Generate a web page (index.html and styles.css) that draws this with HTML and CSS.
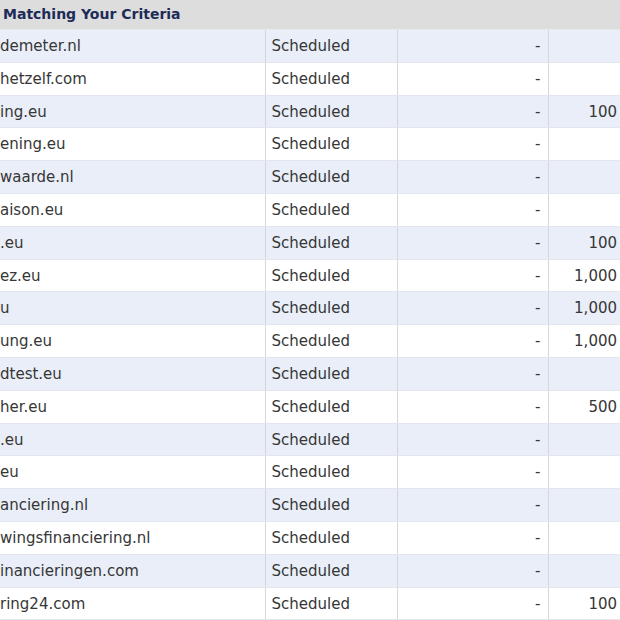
FILE: index.html
```html
<!DOCTYPE html>
<html lang="en">
<head>
    <meta charset="UTF-8">
    <title>Domains Matching Your Criteria</title>
    <link rel="stylesheet" href="styles.css">
</head>
<body>
    <div class="results">
        <table class="domains">
            <colgroup>
                <col class="col-name">
                <col class="col-status">
                <col class="col-bid">
                <col class="col-price">
            </colgroup>
            <thead>
                <tr>
                    <th colspan="4">Matching Your Criteria</th>
                </tr>
            </thead>
            <tbody>
                <tr><td>demeter.nl</td><td>Scheduled</td><td class="num">-</td><td class="num"></td></tr>
                <tr><td>hetzelf.com</td><td>Scheduled</td><td class="num">-</td><td class="num"></td></tr>
                <tr><td>ing.eu</td><td>Scheduled</td><td class="num">-</td><td class="num">100</td></tr>
                <tr><td>ening.eu</td><td>Scheduled</td><td class="num">-</td><td class="num"></td></tr>
                <tr><td>waarde.nl</td><td>Scheduled</td><td class="num">-</td><td class="num"></td></tr>
                <tr><td>aison.eu</td><td>Scheduled</td><td class="num">-</td><td class="num"></td></tr>
                <tr><td>.eu</td><td>Scheduled</td><td class="num">-</td><td class="num">100</td></tr>
                <tr><td>ez.eu</td><td>Scheduled</td><td class="num">-</td><td class="num">1,000</td></tr>
                <tr><td>u</td><td>Scheduled</td><td class="num">-</td><td class="num">1,000</td></tr>
                <tr><td>ung.eu</td><td>Scheduled</td><td class="num">-</td><td class="num">1,000</td></tr>
                <tr><td>dtest.eu</td><td>Scheduled</td><td class="num">-</td><td class="num"></td></tr>
                <tr><td>her.eu</td><td>Scheduled</td><td class="num">-</td><td class="num">500</td></tr>
                <tr><td>.eu</td><td>Scheduled</td><td class="num">-</td><td class="num"></td></tr>
                <tr><td>eu</td><td>Scheduled</td><td class="num">-</td><td class="num"></td></tr>
                <tr><td>anciering.nl</td><td>Scheduled</td><td class="num">-</td><td class="num"></td></tr>
                <tr><td>wingsfinanciering.nl</td><td>Scheduled</td><td class="num">-</td><td class="num"></td></tr>
                <tr><td>inancieringen.com</td><td>Scheduled</td><td class="num">-</td><td class="num"></td></tr>
                <tr><td>ring24.com</td><td>Scheduled</td><td class="num">-</td><td class="num">100</td></tr>
            </tbody>
        </table>
    </div>
</body>
</html>
```

FILE: styles.css
```css
* {
    margin: 0;
    padding: 0;
    box-sizing: border-box;
}

body {
    font-family: 'DejaVu Sans', Verdana, sans-serif;
    font-size: 15px;
    color: #363636;
    background: #ffffff;
    overflow: hidden;
}

.results {
    width: 620px;
    overflow: hidden;
}

.domains {
    width: 628px;
    border-collapse: collapse;
    table-layout: fixed;
}

.col-name { width: 265px; }
.col-status { width: 132px; }
.col-bid { width: 151px; }
.col-price { width: 80px; }

/* Header bar */
.domains th {
    height: 29.6px;
    padding: 0 3px 1px;
    text-align: left;
    font-size: 14px;
    font-weight: bold;
    color: #1d2b57;
    background: #dddddd;
    border-bottom: 1px solid #e9e9e9;
}

.domains td {
    height: 32.8px;
    padding: 0 6px;
    white-space: nowrap;
    overflow: hidden;
    border-bottom: 1px solid #e3e6ee;
    border-left: 1px solid #d6d6d6;
}

.domains td:first-child {
    padding-left: 0;
    border-left: none;
}

.domains td.num {
    text-align: right;
    padding-right: 7px;
}

.domains td.num:last-child {
    padding-right: 11px;
}

.domains tbody tr:nth-child(odd) td {
    background: #e9eef8;
}

.domains tbody tr:nth-child(even) td {
    background: #ffffff;
}
```
